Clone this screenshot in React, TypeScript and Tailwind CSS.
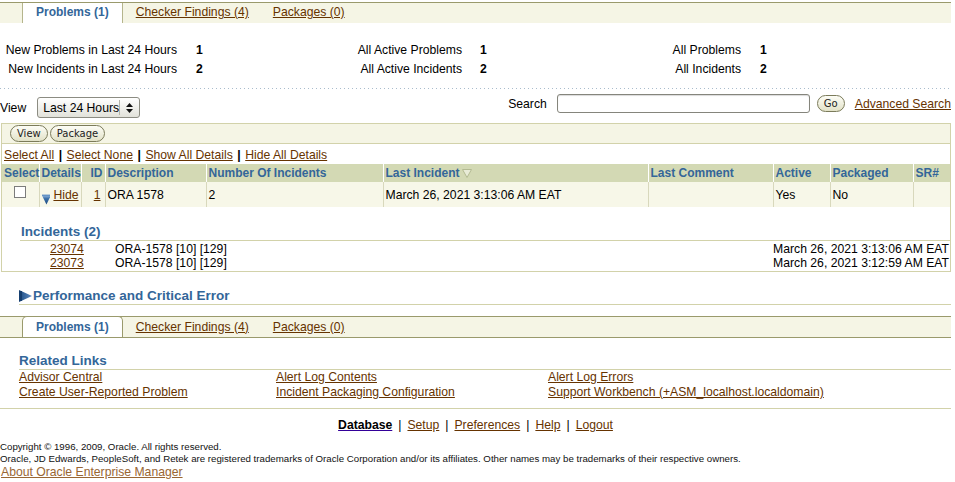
import React from "react";

const LINK = "text-[#663300] underline";

function SortIcon() {
  return (
    <svg width="10" height="9" viewBox="0 0 10 9" className="ml-[2px] inline-block">
      <polygon points="0.5,0.5 9.5,0.5 5,8.5" fill="#e8ebd6" stroke="#b3ba92" strokeWidth="1" />
    </svg>
  );
}

function DownArrow() {
  return (
    <svg width="10" height="11" viewBox="0 0 10 11" className="translate-y-[5px]">
      <defs>
        <linearGradient id="da" x1="0" y1="0" x2="0" y2="1">
          <stop offset="0" stopColor="#8fb4dc" />
          <stop offset="0.35" stopColor="#3b6fa8" />
          <stop offset="1" stopColor="#1d4c82" />
        </linearGradient>
      </defs>
      <polygon points="0,1 10,1 5,11" fill="url(#da)" />
      <rect x="0" y="0" width="10" height="1.5" fill="#5f8fc4" />
    </svg>
  );
}

function RightArrow() {
  return (
    <svg width="13" height="12" viewBox="0 0 13 12" className="mr-px">
      <defs>
        <linearGradient id="ra" x1="0" y1="0" x2="1" y2="0">
          <stop offset="0" stopColor="#163f70" />
          <stop offset="0.3" stopColor="#2f5f96" />
          <stop offset="1" stopColor="#5f8cc2" />
        </linearGradient>
      </defs>
      <polygon points="0,0 13,6 0,12" fill="url(#ra)" />
      <rect x="0" y="1" width="3" height="10" fill="#163f70" />
    </svg>
  );
}

function SelectArrows() {
  return (
    <svg width="7" height="12" viewBox="0 0 7 12" className="mx-[6px]">
      <polygon points="0,5 3.5,1 7,5" fill="#111" />
      <polygon points="0,7 3.5,11 7,7" fill="#111" />
    </svg>
  );
}

function Tabs({ top }: { top: boolean }) {
  return (
    <div
      className={
        top
          ? "mt-[2px] flex h-[21px] w-full border-t border-[#9a9a6c] bg-[#f5f5e5]"
          : "mt-[11px] flex h-[22px] w-full border-y border-[#9a9a6c] bg-[#f5f5e5]"
      }
    >
      <div className="w-[22px]" />
      <div
        className={
          top
            ? "flex items-center border-x border-[#b5b58c] bg-white px-[13px] pb-[2px] text-[12px] font-bold text-[#336699]"
            : "-mt-px flex items-center rounded-t-[5px] border-x border-t border-[#9a9a6c] bg-white px-[13px] text-[12px] font-bold text-[#336699]"
        }
      >
        Problems (1)
      </div>
      <a className={"flex items-center pl-[13px] pr-[12px] " + (top ? "pb-[2px] " : "pb-px ") + LINK}>Checker Findings (4)</a>
      <a className={"flex items-center pl-[12px] " + (top ? "pb-[2px] " : "pb-px ") + LINK}>Packages (0)</a>
    </div>
  );
}

function PillButton({ label, className = "" }: { label: string; className?: string }) {
  return (
    <span
      className={
        "flex h-[17px] items-center rounded-full border border-[#7b7b5a] bg-gradient-to-b from-[#fdfdf6] to-[#e2e2c8] px-[6px] font-['DejaVu_Sans',sans-serif] text-[10px] leading-none text-[#222] " +
        className
      }
    >
      {label}
    </span>
  );
}

export default function App() {
  const th = "h-[18px] border-l border-white px-[2px] text-left text-[12px] font-bold text-[#336699] whitespace-nowrap";
  const td = "border-l border-[#d8d8bc] px-[2px] whitespace-nowrap";
  const pipe = "mx-[4.5px] font-bold";
  const heading = "h-[18px] border-b border-[#d2d2aa] pt-px text-[13.5px] font-bold leading-[16px] text-[#336699]";
  return (
    <div className="min-h-[482px] w-[955px] bg-white font-['Liberation_Sans',Arial,sans-serif] text-[12.2px] leading-[14px] text-black">
      <div className="w-[951px]">
        <Tabs top />

        {/* summary */}
        <div className="mt-[18px] grid grid-cols-[177px_123px_162px_118px_161px_1fr] leading-[19px]">
          <div className="text-right">New Problems in Last 24 Hours</div>
          <div className="pl-[19px] font-bold">1</div>
          <div className="text-right">All Active Problems</div>
          <div className="pl-[18px] font-bold">1</div>
          <div className="text-right">All Problems</div>
          <div className="pl-[19px] font-bold">1</div>
          <div className="text-right">New Incidents in Last 24 Hours</div>
          <div className="pl-[19px] font-bold">2</div>
          <div className="text-right">All Active Incidents</div>
          <div className="pl-[18px] font-bold">2</div>
          <div className="text-right">All Incidents</div>
          <div className="pl-[19px] font-bold">2</div>
        </div>

        <div className="mt-[9px] h-px w-full bg-[repeating-linear-gradient(to_right,#a9bccd_0px,#a9bccd_1px,transparent_1px,transparent_4px)]" />

        {/* view / search row */}
        <div className="mt-[5px] flex h-[29px] justify-between">
          <div className="mt-[3px] flex h-[21px] items-center">
            <span>View</span>
            <div className="ml-[11px] flex h-[21px] w-[103px] items-center rounded-[3px] border border-[#8c8c82] bg-gradient-to-b from-white to-[#e2e2da] pl-[5px]">
              <span className="flex-1 whitespace-nowrap">Last 24 Hours</span>
              <span className="h-[15px] w-px bg-[#b4b4aa]" />
              <SelectArrows />
            </div>
          </div>
          <div className="flex h-[19px] items-center">
            <span>Search</span>
            <div className="ml-[10px] h-[19px] w-[253px] rounded-[3px] border border-[#85857c] bg-white shadow-[inset_0_1px_1px_rgba(0,0,0,0.15)]" />
            <PillButton label="Go" className="ml-[7px] w-[28px] justify-center" />
            <a className={"ml-[10px] whitespace-nowrap " + LINK}>Advanced Search</a>
          </div>
        </div>

        {/* main box */}
        <div className="ml-px w-[950px] border border-[#d2d2aa]">
          <div className="flex h-[20px] items-center gap-[2px] border-b border-[#d2d2aa] bg-[#f5f5e5] pl-[8px]">
            <PillButton label="View" />
            <PillButton label="Package" />
          </div>
          <div className="flex h-[20px] items-center pl-[2px] pt-px">
            <a className={LINK}>Select All</a>
            <span className={pipe}>|</span>
            <a className={LINK}>Select None</a>
            <span className={pipe}>|</span>
            <a className={LINK}>Show All Details</a>
            <span className={pipe}>|</span>
            <a className={LINK}>Hide All Details</a>
          </div>
          <table className="w-full table-fixed border-collapse">
            <colgroup>
              <col className="w-[37px]" />
              <col className="w-[42px]" />
              <col className="w-[24px]" />
              <col className="w-[101px]" />
              <col className="w-[177px]" />
              <col className="w-[265px]" />
              <col className="w-[125px]" />
              <col className="w-[57px]" />
              <col className="w-[83px]" />
              <col className="w-[37px]" />
            </colgroup>
            <thead>
              <tr className="bg-[#d3d9b4]">
                <th className={th + " border-l-0"}>Select</th>
                <th className={th}>Details</th>
                <th className={th + " text-right"}>ID</th>
                <th className={th}>Description</th>
                <th className={th}>Number Of Incidents</th>
                <th className={th}>
                  <span className="inline-flex items-center">
                    Last Incident
                    <SortIcon />
                  </span>
                </th>
                <th className={th}>Last Comment</th>
                <th className={th}>Active</th>
                <th className={th}>Packaged</th>
                <th className={th}>SR#</th>
              </tr>
            </thead>
            <tbody>
              <tr className="h-[25px] bg-[#f7f7e8]">
                <td className={td + " border-l-0 align-top pt-[4px]"}>
                  <span className="mx-auto block h-[12px] w-[12px] border border-[#7c7c7c] bg-white" />
                </td>
                <td className={td}>
                  <span className="flex items-center">
                    <DownArrow />
                    <a className={"ml-[3px] " + LINK}>Hide</a>
                  </span>
                </td>
                <td className={td + " pr-[4px] text-right"}>
                  <a className={LINK}>1</a>
                </td>
                <td className={td}>ORA 1578</td>
                <td className={td}>2</td>
                <td className={td}>March 26, 2021 3:13:06 AM EAT</td>
                <td className={td}></td>
                <td className={td}>Yes</td>
                <td className={td}>No</td>
                <td className={td}></td>
              </tr>
            </tbody>
          </table>

          {/* incidents */}
          <div className="ml-[18px] pt-[16px]">
            <div className={heading + " pl-px"}>Incidents (2)</div>
            <div className="grid grid-cols-[30px_65px_1fr_auto] pt-px pb-px leading-[14px]">
              <div />
              <a className={LINK}>23074</a>
              <div>ORA-1578 [10] [129]</div>
              <div className="pr-px text-right">March 26, 2021 3:13:06 AM EAT</div>
              <div />
              <a className={LINK}>23073</a>
              <div>ORA-1578 [10] [129]</div>
              <div className="pr-px text-right">March 26, 2021 3:12:59 AM EAT</div>
            </div>
          </div>
        </div>

        {/* performance */}
        <div className={"ml-[19px] mt-[15px] flex items-center " + heading}>
          <RightArrow />
          Performance and Critical Error
        </div>

        <Tabs top={false} />

        {/* related links */}
        <div className={"ml-[19px] mt-[14px] " + heading}>Related Links</div>
        <div className="ml-[19px] grid grid-cols-[257px_272px_1fr] leading-[15px]">
          <a className={LINK}>Advisor Central</a>
          <a className={LINK}>Alert Log Contents</a>
          <a className={LINK}>Alert Log Errors</a>
          <a className={LINK}>Create User-Reported Problem</a>
          <a className={LINK}>Incident Packaging Configuration</a>
          <a className={LINK}>Support Workbench (+ASM_localhost.localdomain)</a>
        </div>

        <div className="mt-[8px] border-t border-[#d2d2aa]" />

        {/* footer nav */}
        <div className="mt-[8px] flex justify-center leading-[16px]">
          <a className="font-bold text-black underline decoration-[#330099]">Database</a>
          <span className="mx-[6px]">|</span>
          <a className={LINK}>Setup</a>
          <span className="mx-[6px]">|</span>
          <a className={LINK}>Preferences</a>
          <span className="mx-[6px]">|</span>
          <a className={LINK}>Help</a>
          <span className="mx-[6px]">|</span>
          <a className={LINK}>Logout</a>
        </div>

        <div className="mt-[8px] text-[9.7px] leading-[12px] text-[#111]">
          <div>Copyright © 1996, 2009, Oracle. All rights reserved.</div>
          <div className="whitespace-nowrap">
            Oracle, JD Edwards, PeopleSoft, and Retek are registered trademarks of Oracle Corporation and/or its affiliates. Other names may be trademarks of their respective owners.
          </div>
        </div>
        <a className="block pl-px leading-[14px] text-[#996633] underline">About Oracle Enterprise Manager</a>
      </div>
    </div>
  );
}
